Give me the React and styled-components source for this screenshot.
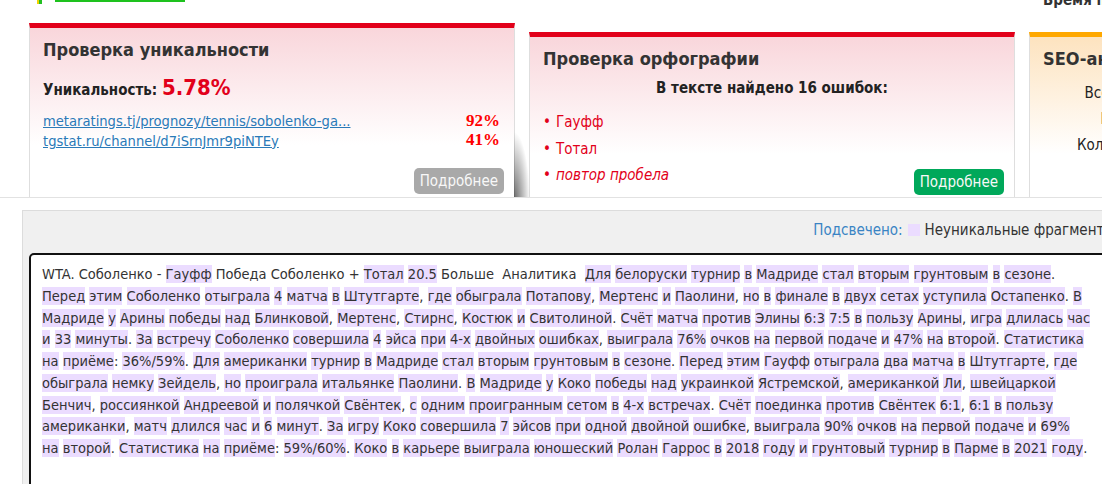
import React from "react";
import styled, { createGlobalStyle } from "styled-components";

const GlobalStyle = createGlobalStyle`
  html, body {
    margin: 0;
    padding: 0;
    background: #fff;
  }
  body {
    width: 1102px;
    height: 484px;
    overflow: hidden;
    font-family: "DejaVu Sans Condensed", "DejaVu Sans", sans-serif;
    color: #333;
  }
`;

const lead = [
  ["WTA. Соболенко - ", false],
  ["Гауфф", true],
  [" Победа Соболенко + ", false],
  ["Тотал", true],
  [" ", false],
  ["20.5", true],
  [" Больше  Аналитика  ", false],
];

// lines as they are laid out in the checker's text field
const articleLines = [
  "Для белоруски турнир в Мадриде стал вторым грунтовым в сезоне.",
  "Перед этим Соболенко отыграла 4 матча в Штутгарте, где обыграла Потапову, Мертенс и Паолини, но в финале в двух сетах уступила Остапенко. В",
  "Мадриде у Арины победы над Блинковой, Мертенс, Стирнс, Костюк и Свитолиной. Счёт матча против Элины 6:3 7:5 в пользу Арины, игра длилась час",
  "и 33 минуты. За встречу Соболенко совершила 4 эйса при 4-х двойных ошибках, выиграла 76% очков на первой подаче и 47% на второй. Статистика",
  "на приёме: 36%/59%. Для американки турнир в Мадриде стал вторым грунтовым в сезоне. Перед этим Гауфф отыграла два матча в Штутгарте, где",
  "обыграла немку Зейдель, но проиграла итальянке Паолини. В Мадриде у Коко победы над украинкой Ястремской, американкой Ли, швейцаркой",
  "Бенчич, россиянкой Андреевой и полячкой Свёнтек, с одним проигранным сетом в 4-х встречах. Счёт поединка против Свёнтек 6:1, 6:1 в пользу",
  "американки, матч длился час и 6 минут. За игру Коко совершила 7 эйсов при одной двойной ошибке, выиграла 90% очков на первой подаче и 69%",
  "на второй. Статистика на приёме: 59%/60%. Коко в карьере выиграла юношеский Ролан Гаррос в 2018 году и грунтовый турнир в Парме в 2021 году.",
];

const sources = [
  { url: "metaratings.tj/prognozy/tennis/sobolenko-ga...", score: "92%" },
  { url: "tgstat.ru/channel/d7iSrnJmr9piNTEy", score: "41%" },
];

const errors = [
  { word: "Гауфф" },
  { word: "Тотал" },
  { word: "повтор пробела", note: true },
];

const seoStats = [
  ["Всего символов:", "1 452"],
  ["Без пробелов:", "1 241"],
  ["Количество слов:", "212"],
];

const markWords = (text) =>
  text.split(/(\s+)/).map((part, i) => {
    if (!part.trim()) return part;
    const [, word, tail] = part.match(/^(.*?)([.,:]*)$/);
    return (
      <React.Fragment key={i}>
        <Mark>{word}</Mark>
        {tail}
      </React.Fragment>
    );
  });

const App = () => {
  return (
    <Page>
      <GlobalStyle />
      <Header>
        <TabGroup>
          <TabDot />
          <TabLine />
        </TabGroup>
        <CheckTime>Время проверки: 3 сек.</CheckTime>
      </Header>

      <CardsRow>
        <Card $accent="#e2001a" $tint="#f9d6db" $raised>
          <CardTitle>Проверка уникальности</CardTitle>
          <UniqLine>
            Уникальность: <UniqValue>5.78%</UniqValue>
          </UniqLine>
          <SourceList>
            {sources.map((s) => (
              <SourceRow key={s.url}>
                <SourceLink href="#">{s.url}</SourceLink>
                <Score>{s.score}</Score>
              </SourceRow>
            ))}
          </SourceList>
          <CardFooter $gap={18}>
            <MoreButton $color="#a9a9a9">Подробнее</MoreButton>
          </CardFooter>
        </Card>

        <Card $accent="#e2001a" $tint="#f9d6db" $shaded>
          <CardTitle>Проверка орфографии</CardTitle>
          <ErrorCount>В тексте найдено 16 ошибок:</ErrorCount>
          <CardFooter $gap={11}>
            <ErrorList>
              {errors.map((e) => (
                <ErrorItem key={e.word} $note={e.note}>
                  {e.word}
                </ErrorItem>
              ))}
            </ErrorList>
            <MoreButton $color="#00a85a">Подробнее</MoreButton>
          </CardFooter>
        </Card>

        <Card $accent="#ffa800" $tint="#fde3bf">
          <CardTitle>SEO-анализ текста</CardTitle>
          <StatsGrid>
            {seoStats.map(([label, value]) => (
              <React.Fragment key={label}>
                <StatLabel>{label}</StatLabel>
                <StatValue>{value}</StatValue>
              </React.Fragment>
            ))}
          </StatsGrid>
        </Card>
      </CardsRow>

      <ResultPanel>
        <Legend>
          <LegendKey>Подсвечено:</LegendKey>
          <LegendSwatch />
          <span>Неуникальные фрагменты</span>
        </Legend>
        <TextBox>
          {lead.map(([text, marked], i) =>
            marked ? <Mark key={i}>{text}</Mark> : text
          )}
          {markWords(articleLines.join("\n"))}
        </TextBox>
      </ResultPanel>
    </Page>
  );
};

const Page = styled.div`
  width: 1160px;
`;

const Header = styled.div`
  display: grid;
  grid-template-columns: 1fr 117px;
  grid-template-rows: 8px;
  height: 8px;
  padding-left: 37px;
`;

const TabGroup = styled.div`
  display: flex;
  align-items: flex-start;
  gap: 13px;
`;

const TabDot = styled.div`
  width: 5px;
  height: 4px;
  background: linear-gradient(90deg, #f2d200 40%, #22c022 40%);
`;

const TabLine = styled.div`
  width: 130px;
  height: 2px;
  background: #1ec21e;
`;

const CheckTime = styled.div`
  align-self: end;
  font-size: 15px;
  font-weight: bold;
  line-height: 1;
  white-space: nowrap;
  color: #333;
`;

const CardsRow = styled.div`
  display: flex;
  align-items: flex-start;
  gap: 14px;
  margin-top: 15px;
  padding-left: 29px;
  height: 175px;
  box-sizing: border-box;
  overflow: hidden;
  border-bottom: 1px solid #e2e2e2;
`;

const Card = styled.div`
  position: relative;
  flex: 0 0 486px;
  height: 200px;
  box-sizing: border-box;
  margin-top: ${(p) => (p.$raised ? 0 : 9)}px;
  padding: 11px 13px 0 13px;
  border-top: 5px solid ${(p) => p.$accent};
  border-left: 1px solid #dedede;
  border-right: 1px solid #dedede;
  background: linear-gradient(to bottom, ${(p) => p.$tint} 0%, #fff 60%);
  display: flex;
  flex-direction: column;

  ${(p) =>
    p.$shaded &&
    `
    &::before {
      content: "";
      position: absolute;
      left: -16px;
      top: 95px;
      width: 16px;
      height: 70px;
      border-bottom-left-radius: 5px;
      background: radial-gradient(
        ellipse 100% 100% at 0% 100%,
        rgba(0, 0, 0, 0.6),
        rgba(0, 0, 0, 0) 100%
      );
    }
  `}
`;

const CardTitle = styled.h2`
  margin: 0;
  font-size: 18px;
  line-height: 22px;
  font-weight: bold;
  color: #333;
  white-space: nowrap;
`;

const UniqLine = styled.div`
  margin-top: 14px;
  font-size: 15px;
  line-height: 26px;
  font-weight: bold;
  color: #222;
`;

const UniqValue = styled.span`
  font-size: 22px;
  color: #e2001a;
`;

const SourceList = styled.div`
  margin-top: 8px;
`;

const SourceRow = styled.div`
  display: flex;
  justify-content: space-between;
  align-items: center;
  height: 19.5px;
  padding-right: 1px;
`;

const SourceLink = styled.a`
  font-size: 14.6px;
  color: #2a7ab8;
  text-decoration: underline;
  white-space: nowrap;
`;

const Score = styled.span`
  font-family: "Liberation Serif", serif;
  font-weight: bold;
  font-size: 17px;
  color: #ff0000;
`;

const CardFooter = styled.div`
  display: flex;
  justify-content: flex-end;
  align-items: flex-end;
  margin-top: ${(p) => p.$gap}px;
  margin-right: -3px;
`;

const MoreButton = styled.button`
  height: 26px;
  padding: 0 6px;
  border: none;
  border-radius: 5px;
  background: ${(p) => p.$color};
  color: #f8f8f8;
  font-family: inherit;
  font-size: 15px;
  cursor: pointer;
`;

const ErrorCount = styled.div`
  margin-top: 8px;
  text-align: center;
  font-size: 15px;
  line-height: 20px;
  font-weight: bold;
  color: #222;
`;

const ErrorList = styled.ul`
  list-style: none;
  margin: 0 auto 6px 0;
  padding: 0;
`;

const ErrorItem = styled.li`
  font-size: 15px;
  line-height: 26.5px;
  color: #e2001a;
  font-style: ${(p) => (p.$note ? "italic" : "normal")};

  &::before {
    content: "•";
    font-style: normal;
    margin-right: 5px;
  }
`;

const StatsGrid = styled.div`
  display: grid;
  grid-template-columns: auto auto;
  justify-content: start;
  column-gap: 8px;
  margin-top: 10px;
  padding-left: 34px;
  font-size: 15px;
  line-height: 26px;
  color: #222;
`;

const StatLabel = styled.span`
  text-align: right;
`;

const StatValue = styled.span`
  font-weight: bold;
`;

const ResultPanel = styled.div`
  margin: 12px 0 0 22px;
  padding: 10px 45px 0 6px;
  height: 300px;
  background: #f0f0f0;
  border-top: 1px solid #dcdcdc;
  border-left: 1px solid #dcdcdc;
`;

const Legend = styled.div`
  display: flex;
  justify-content: flex-end;
  align-items: center;
  gap: 5px;
  font-size: 15px;
  line-height: 18px;
  color: #333;
  white-space: nowrap;
`;

const LegendKey = styled.span`
  color: #3a84c4;
`;

const LegendSwatch = styled.span`
  width: 12px;
  height: 12px;
  background: #ebdcff;
`;

const TextBox = styled.div`
  margin-top: 14px;
  width: 1085px;
  min-height: 240px;
  padding: 9px 11px;
  background: #fff;
  border: 2px solid #111;
  border-radius: 5px;
  font-size: 14.5px;
  line-height: 21.75px;
  color: #333;
  white-space: pre-wrap;
`;

const Mark = styled.span`
  background: #ebdcff;
  padding: 1px 0;
`;

export default App;
